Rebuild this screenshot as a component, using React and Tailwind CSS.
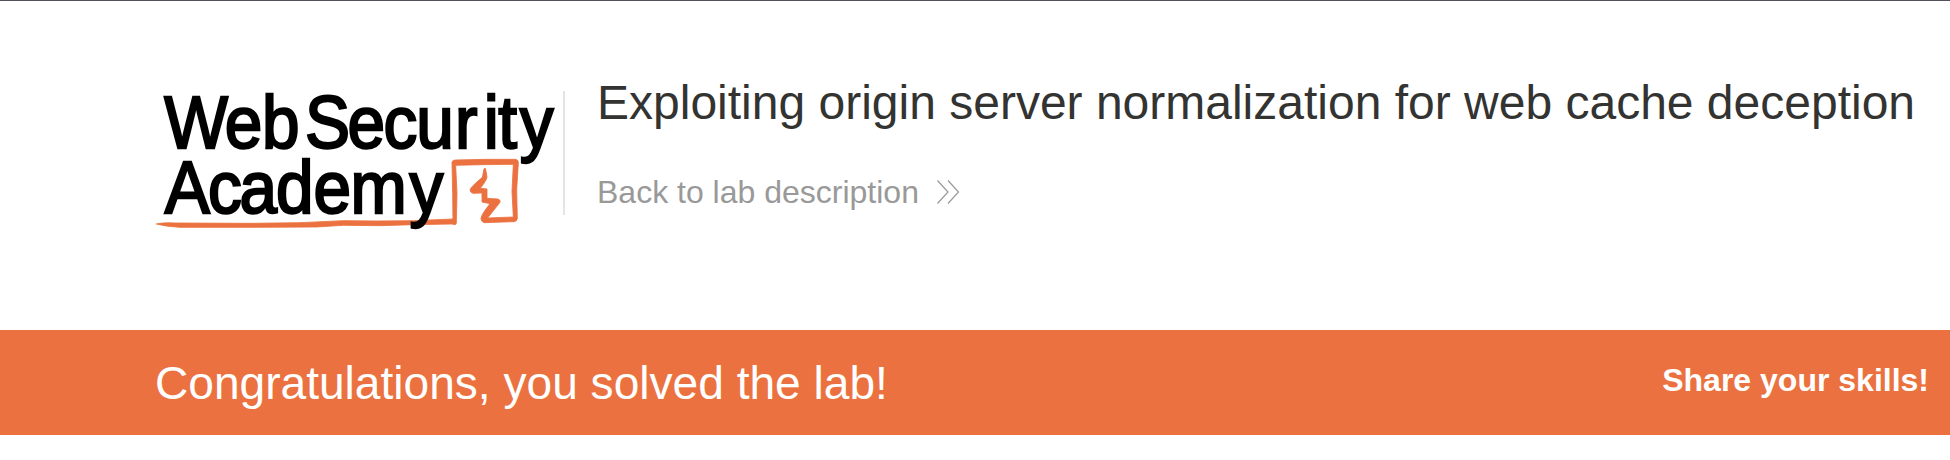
function AcademyLogo() {
  return (
    <svg
      className="h-[150px] w-[408px] shrink-0 overflow-visible"
      viewBox="150 85 408 150"
      role="img"
      aria-label="Web Security Academy"
    >
      <g fill="#eb7240" transform="translate(350 80) scale(.33333)" stroke="#eb7240" strokeWidth="2.5" strokeLinejoin="round">
        <path d="M-581 432 Q-560 427 -525 429 L-300 430 L-150 428 L-20 422 L80 423 L190 422 L309 417 L320 428 L316 434 L306 432 L190 434 L90 437 L-20 436 L-100 441 L-280 442 L-510 442 Q-550 440 -581 432Z" />
        <path d="M306 246 Q308 239 318 240 L410 238 L496 238 Q506 239 505 249 L500 330 L502 416 Q500 425 491 425 L402 428 Q392 424 393 415 Q395 402 420 371 L396 366 L396 339 L369 340 Q360 337 360 330 Q361 322 397 292 L402 267 Q406 262 407 267 L411 292 Q409 302 391 325 L411 327 L411 355 L444 357 Q453 361 450 367 L413 414 L490 411 L486 335 L490 253 L400 254 L317 256 L321 340 L319 426 L309 428 L308 340Z" />
      </g>
      <g
        fill="#000"
        stroke="#000"
        strokeWidth="2.4"
        fontFamily="'Liberation Sans', Arial, sans-serif"
        fontSize="75"
      >
        <text transform="scale(.9 1)" x="182.6 249.8 291" y="147.7">Web</text>
        <text transform="scale(.9 1)" x="339 386 426 462.6 505.5 537.6 553.6 577.5" y="147.7">Security</text>
        <text transform="scale(.9 1)" x="183 231 266 306.6 348.4 389.5 455" y="212.7">Academy</text>
      </g>
    </svg>
  );
}

function DoubleChevron() {
  return (
    <svg className="h-[26px] w-6" viewBox="0 0 24 26" fill="none" stroke="#999" strokeWidth="1.2">
      <path d="M1.5 1.5 12 13 1.5 24.5M12 1.5 22.5 13 12 24.5" />
    </svg>
  );
}

export default function App() {
  return (
    <div className="h-[460px] overflow-hidden bg-white font-['Liberation_Sans',Arial,sans-serif]">
      <header className="flex h-[330px] items-start border-t border-[#554f5c] pl-[150px]">
        <div className="pt-[84px]">
          <AcademyLogo />
        </div>
        <div className="mt-[90px] ml-[5px] h-[124px] w-0.5 bg-[#e4e4e4]" />
        <div className="ml-8 pt-[74px] whitespace-nowrap">
          <h1 className="text-[48px] leading-[56px] text-[#333332]">
            Exploiting origin server normalization for web cache deception
          </h1>
          <a className="mt-[42px] flex items-center gap-[17px] text-[32px] leading-[38px] text-[#999]">
            Back to lab description
            <DoubleChevron />
          </a>
        </div>
      </header>
      <section className="flex h-[105px] items-start justify-between bg-[#eb7240] pr-[21px] pl-[155px] whitespace-nowrap text-white">
        <h2 className="pt-[26px] text-[46.1px] leading-[54px]">Congratulations, you solved the lab!</h2>
        <p className="pt-[32px] text-[32px] leading-[36px] font-bold">Share your skills!</p>
      </section>
    </div>
  );
}
